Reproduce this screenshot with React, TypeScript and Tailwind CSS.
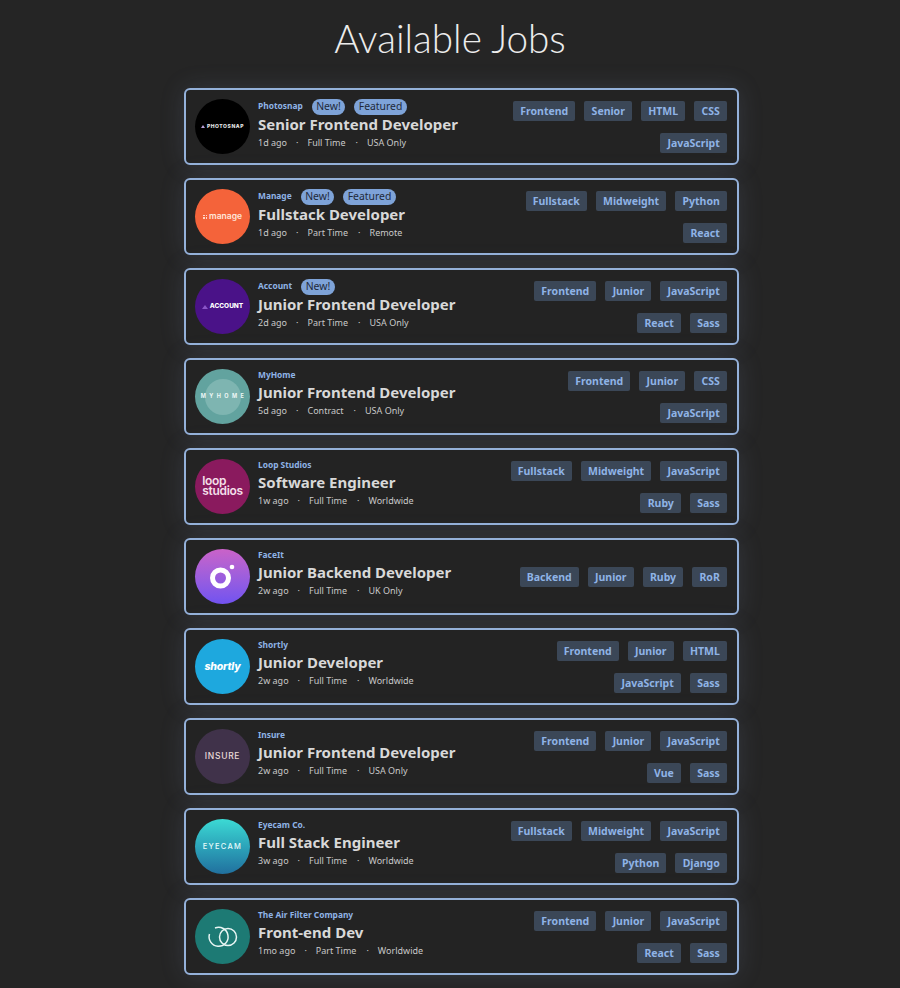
import React from "react";

type Job = { co: string; isNew?: boolean; featured?: boolean; title: string; age: string; type: string; loc: string; tags: string[]; logo: React.ReactNode };

const circle = "w-[55px] h-[55px] rounded-full shrink-0 flex items-center justify-center overflow-hidden";
const logoFont = { fontFamily: '"Inter","Liberation Sans",sans-serif' };

const jobs: Job[] = [
  { co: "Photosnap", isNew: true, featured: true, title: "Senior Frontend Developer", age: "1d ago", type: "Full Time", loc: "USA Only", tags: ["Frontend", "Senior", "HTML", "CSS", "JavaScript"],
    logo: <div className={`${circle} bg-black gap-[2px] text-[#e8e8e8]`}><span className="w-0 h-0 border-x-[2px] border-x-transparent border-b-[3px] border-b-[#b9a0d8]" /><span style={logoFont} className="text-[5px] font-extrabold tracking-[0.55px]">PHOTOSNAP</span></div> },
  { co: "Manage", isNew: true, featured: true, title: "Fullstack Developer", age: "1d ago", type: "Part Time", loc: "Remote", tags: ["Fullstack", "Midweight", "Python", "React"],
    logo: <div className={`${circle} bg-[#f4633a] gap-[2px] text-[#ffe6dc]`}><span className="grid grid-cols-2 gap-[1px]"><i className="w-[1.5px] h-[1.5px] bg-[#ffd5c5]" /><i className="w-[1.5px] h-[1.5px] bg-[#ffd5c5]" /><i className="w-[1.5px] h-[1.5px] bg-[#ffd5c5]" /><i className="w-[1.5px] h-[1.5px] bg-[#ffd5c5]" /></span><span style={logoFont} className="text-[8.5px] font-semibold leading-none">manage</span></div> },
  { co: "Account", isNew: true, title: "Junior Frontend Developer", age: "2d ago", type: "Part Time", loc: "USA Only", tags: ["Frontend", "Junior", "JavaScript", "React", "Sass"],
    logo: <div className={`${circle} bg-[#4a1288] gap-[2px] text-white`}><span className="w-0 h-0 border-x-[3px] border-x-transparent border-b-[4px] border-b-[#8b55c8]" /><span style={logoFont} className="text-[6.5px] font-extrabold">ACCOUNT</span></div> },
  { co: "MyHome", title: "Junior Frontend Developer", age: "5d ago", type: "Contract", loc: "USA Only", tags: ["Frontend", "Junior", "CSS", "JavaScript"],
    logo: <div className={`${circle} bg-[#62a39f] relative`}><span className="absolute w-[36px] h-[36px] rounded-full bg-[#7eb5b1]" /><span style={logoFont} className="relative text-[5.5px] font-bold tracking-[3.4px] ml-[3px] text-[#eef7f6]">MYHOME</span></div> },
  { co: "Loop Studios", title: "Software Engineer", age: "1w ago", type: "Full Time", loc: "Worldwide", tags: ["Fullstack", "Midweight", "JavaScript", "Ruby", "Sass"],
    logo: <div className={`${circle} bg-[#8a1a5e] text-[#f3dfe9]`}><span style={logoFont} className="block text-[12px] font-semibold leading-[10px] tracking-[-0.3px] pb-[2px]">loop<br />studios</span></div> },
  { co: "FaceIt", title: "Junior Backend Developer", age: "2w ago", type: "Full Time", loc: "UK Only", tags: ["Backend", "Junior", "Ruby", "RoR"],
    logo: <div className={`${circle} bg-gradient-to-b from-[#ca62c8] to-[#7152f0]`}><svg width="55" height="55" viewBox="0 0 55 55"><circle cx="25.5" cy="29" r="8" fill="none" stroke="#fff" strokeWidth="5" /><circle cx="37" cy="18" r="2.3" fill="#fff" /></svg></div> },
  { co: "Shortly", title: "Junior Developer", age: "2w ago", type: "Full Time", loc: "Worldwide", tags: ["Frontend", "Junior", "HTML", "JavaScript", "Sass"],
    logo: <div className={`${circle} bg-[#1ea8de] text-white`}><span style={logoFont} className="text-[10.5px] font-extrabold italic tracking-[-0.2px]">shortly</span></div> },
  { co: "Insure", title: "Junior Frontend Developer", age: "2w ago", type: "Full Time", loc: "USA Only", tags: ["Frontend", "Junior", "JavaScript", "Vue", "Sass"],
    logo: <div className={`${circle} bg-[#40324a] text-[#eadbd8]`}><span style={logoFont} className="text-[8.5px] font-medium tracking-[0.7px]">INSURE</span></div> },
  { co: "Eyecam Co.", title: "Full Stack Engineer", age: "3w ago", type: "Full Time", loc: "Worldwide", tags: ["Fullstack", "Midweight", "JavaScript", "Python", "Django"],
    logo: <div className={`${circle} bg-gradient-to-b from-[#3cdad4] to-[#21709e] text-[#e6fbfa]`}><span style={logoFont} className="text-[7.5px] font-medium tracking-[1.3px]">EYECAM</span></div> },
  { co: "The Air Filter Company", title: "Front-end Dev", age: "1mo ago", type: "Part Time", loc: "Worldwide", tags: ["Frontend", "Junior", "JavaScript", "React", "Sass"],
    logo: <div className={`${circle} bg-[#1d7a74]`}><svg width="55" height="55" viewBox="0 0 55 55" fill="none" stroke="#e8f5f3" strokeWidth="1.5"><circle cx="33" cy="28" r="8.5" /><path d="M14.5 25 A9.5 9.5 0 1 0 20 19" /></svg></div> },
];

function Badge({ children }: { children: React.ReactNode }) {
  return <span className="h-[16px] px-[4.5px] flex items-center rounded-full bg-[#7ea3d8] text-[#1f2a3a] text-[10.4px] leading-none">{children}</span>;
}

function Card({ j }: { j: Job }) {
  const badged = j.isNew || j.featured;
  return (
    <div className="w-[555px] h-[77px] rounded-[6px] border-2 border-[#94b1da] bg-[#232323] shadow-[0_0_24px_rgba(130,150,190,0.17)] pl-[9px] pr-[10px] flex items-center">
      {j.logo}
      <div className="ml-[8px] flex-1 min-w-0 self-start pt-[9px]">
        <div className={`flex items-center gap-[9px] ${badged ? "h-[15px]" : "h-[13px]"}`}>
          <span className="text-[8.4px] font-bold text-[#8fb3e6]">{j.co}</span>
          {j.isNew && <Badge>New!</Badge>}
          {j.featured && <Badge>Featured</Badge>}
        </div>
        <div className="text-[15px] font-bold text-[#d8d8d8] leading-[21px] mb-[1px]">{j.title}</div>
        <div className="flex text-[9px] text-[#c9c9c9] leading-[13px]">
          <span>{j.age}</span><span className="mx-[9px]">·</span><span>{j.type}</span><span className="ml-[10px] mr-[9px]">·</span><span>{j.loc}</span>
        </div>
      </div>
      <div className="w-[222px] pt-[1px] flex flex-wrap justify-end gap-x-[9px] gap-y-[12px]">
        {j.tags.map((t) => (
          <span key={t} className="h-[20px] px-[7.2px] pt-[2px] flex items-center rounded-[2px] bg-[#3b4757] text-[#8fb3e6] text-[10.5px] font-bold">{t}</span>
        ))}
      </div>
    </div>
  );
}

export default function App() {
  return (
    <div className="min-h-[988px] bg-[#252525] flex flex-col items-center overflow-hidden" style={{ fontFamily: '"Noto Sans",sans-serif' }}>
      <h1 className="text-[38.7px] leading-[46px] mt-[15px] mb-[27px] font-light text-[#ececec]" style={{ fontFamily: 'Lato,sans-serif' }}>Available Jobs</h1>
      <div className="flex flex-col gap-[13px] ml-[23px]">
        {jobs.map((j) => <Card key={j.co} j={j} />)}
      </div>
    </div>
  );
}
